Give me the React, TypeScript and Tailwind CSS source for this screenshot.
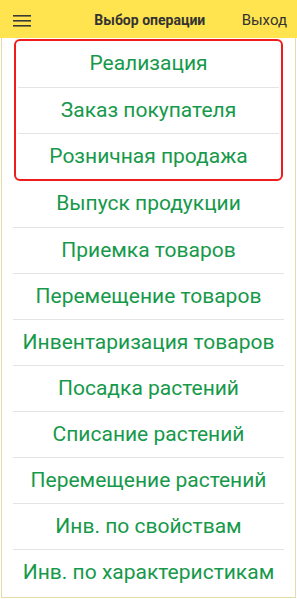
import React from 'react';

const featured = ['Реализация', 'Заказ покупателя', 'Розничная продажа'];

const operations = [
  'Выпуск продукции',
  'Приемка товаров',
  'Перемещение товаров',
  'Инвентаризация товаров',
  'Посадка растений',
  'Списание растений',
  'Перемещение растений',
  'Инв. по свойствам',
  'Инв. по характеристикам',
];

const MenuIcon: React.FC = () => (
  <svg width="20" height="14" viewBox="0 0 20 14" className="block">
    <rect x="1" y="1" width="18" height="1.6" fill="#3a3a3a" />
    <rect x="1" y="6" width="18" height="1.6" fill="#3a3a3a" />
    <rect x="1" y="11" width="18" height="1.6" fill="#3a3a3a" />
  </svg>
);

const App: React.FC = () => {
  return (
    <div className="w-[297px] h-[599px] bg-white flex flex-col font-['Roboto',sans-serif] overflow-hidden">
      <header className="h-[38px] shrink-0 bg-[#ffe44f] flex items-center pl-[12px] pr-[10px] pt-[3px]">
        <MenuIcon />
        <h1 className="flex-1 text-center text-[14px] font-bold text-[#333] pl-[26px]">
          Выбор операции
        </h1>
        <span className="text-[15px] text-[#333]">Выход</span>
      </header>

      <div className="flex-1 flex flex-col border-x border-b border-[#e6dca6] mx-px mb-px pt-px">
        <div className="mx-[12px] border-2 border-[#f01c1c] rounded-[6px] flex flex-col">
          {featured.map((name, i) => (
            <button
              key={name}
              className={`h-[46px] flex items-center justify-center text-[21px] text-[#16994a] mx-[2px] ${
                i > 0 ? 'border-t border-[#e4e4e4]' : ''
              }`}
            >
              {name}
            </button>
          ))}
        </div>

        <div className="mx-[11px] flex flex-col">
          {operations.map((name, i) => (
            <button
              key={name}
              className={`h-[46px] flex items-center justify-center text-[21px] text-[#16994a] ${
                i > 0 ? 'border-t border-[#e4e4e4]' : ''
              }`}
            >
              {name}
            </button>
          ))}
        </div>
      </div>
    </div>
  );
};

export default App;
